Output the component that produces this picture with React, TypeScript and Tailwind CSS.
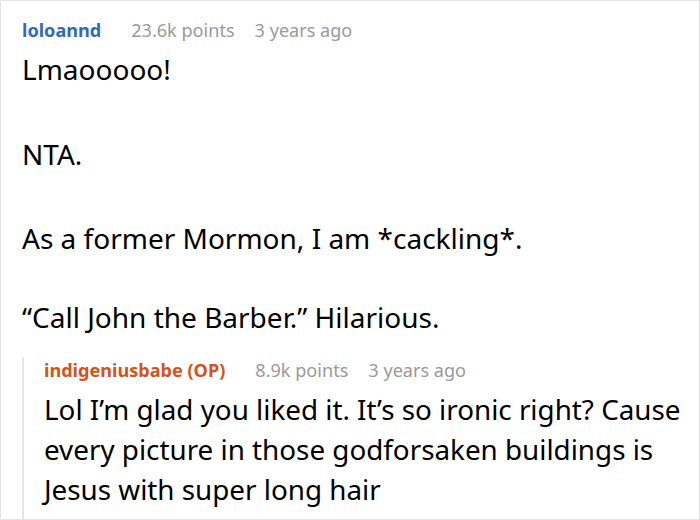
export default function App() {
  return (
    <div className="w-[700px] h-[520px] border border-[#e3e3e3] bg-white overflow-hidden font-['Noto_Sans',sans-serif] text-black">
      <div className="pl-[21px] pt-[16px]">
        <div className="flex items-baseline gap-[30px] text-[18.1px] leading-[26px]">
          <span className="font-bold text-[#336ab5]">loloannd</span>
          <span className="text-[#999999]">23.6k points</span>
          <span className="text-[#999999] -ml-[10px]">3 years ago</span>
        </div>
        <div className="text-[28px] leading-[40px] mt-[6px]">
          <p>Lmaooooo!</p>
          <p className="mt-[45px]">NTA.</p>
          <p className="mt-[44px]">As a former Mormon, I am *cackling*.</p>
          <p className="mt-[39px]">“Call John the Barber.” Hilarious.</p>
        </div>
        <div className="mt-[20px] border-l-2 border-[#e5e5e5] pl-[20px] pb-[10px]">
          <div className="flex items-baseline gap-[30px] text-[18.1px] leading-[26px]">
            <span className="font-bold text-[#d4521c]">indigeniusbabe (OP)</span>
            <span className="text-[#999999]">8.9k points</span>
            <span className="text-[#999999] -ml-[10px]">3 years ago</span>
          </div>
          <div className="text-[27.8px] leading-[40px] mt-[6px] font-stretch-condensed">
            <p>Lol I’m glad you liked it. It’s so ironic right? Cause every picture in those godforsaken buildings is Jesus with super long hair</p>
          </div>
        </div>
      </div>
    </div>
  );
}
